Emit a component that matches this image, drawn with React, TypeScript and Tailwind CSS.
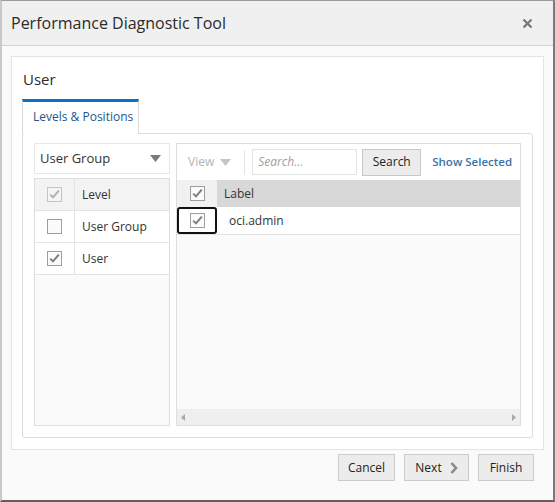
import React from 'react';

const font = { fontFamily: '"Open Sans", "Noto Sans", sans-serif' };

const CheckBox = ({ checked, faded }: { checked?: boolean; faded?: boolean }) => (
  <svg width="15" height="15" viewBox="0 0 15 15" className="block">
    <rect
      x="0.5"
      y="0.5"
      width="14"
      height="14"
      fill={faded ? '#f4f4f4' : '#fbfbfb'}
      stroke={faded ? '#c4c4c4' : '#9e9e9e'}
    />
    {checked && (
      <path
        d="M3.2 7.6 L6 10.4 L11.8 3.6"
        fill="none"
        stroke={faded ? '#b0b0b0' : '#7d7d7d'}
        strokeWidth="2"
      />
    )}
  </svg>
);

const Caret = ({ color }: { color: string }) => (
  <svg width="11" height="7" viewBox="0 0 11 7" className="block">
    <path d="M0 0 H11 L5.5 7 Z" fill={color} />
  </svg>
);

const levelRows = [
  { label: 'Level', checked: true, faded: true, head: true },
  { label: 'User Group', checked: false },
  { label: 'User', checked: true },
];

export default function App() {
  return (
    <div
      className="flex h-[502px] w-[555px] flex-col border-l-2 border-t border-r-2 border-b-2 border-l-[#c8c8c8] border-t-[#9a9a9a] border-r-[#7a7a7a] border-b-[#5f5f5f] bg-[#fafafa] text-[#333]"
      style={font}
    >
      <div className="flex h-[45px] shrink-0 items-center justify-between border-b border-[#d3d3d3] bg-[#f0f0f0] pl-[9px] pr-[20px]">
        <span className="text-[16px] text-[#2b2b2b]">Performance Diagnostic Tool</span>
        <svg width="11" height="11" viewBox="0 0 11 11">
          <path d="M1.5 1.5 L9.5 9.5 M9.5 1.5 L1.5 9.5" stroke="#777" strokeWidth="2.2" />
        </svg>
      </div>

      <div className="flex flex-1 flex-col px-[9px] pt-[10px]">
        <div className="flex flex-col border border-[#e4e4e4] bg-white px-[10px] pb-[11px] pt-[11px]">
          <div className="pl-px text-[15px] leading-[22px] text-[#2b2b2b]">User</div>

          <div className="mt-[9px] flex">
            <div className="relative z-10 -mb-px w-[117px] border-x border-t-[3px] border-x-[#d8d8d8] border-t-[#0a71c6] bg-white pb-[8px] pl-[10px] pt-[6px] text-[12px] text-[#22578c]">
              Levels &amp; Positions
            </div>
          </div>

          <div className="flex h-[305px] gap-[6px] rounded-[3px] border border-[#dcdcdc] pb-[11px] pl-[11px] pr-[11px] pt-[9px]">
            <div className="flex w-[136px] flex-col gap-[4px]">
              <div className="flex h-[31px] items-center justify-between border border-[#e6e6e6] bg-white pl-[5px] pr-[8px] text-[13px] text-[#333]">
                <span>User Group</span>
                <Caret color="#7a7a7a" />
              </div>
              <div className="flex-1 border border-[#dedede] bg-[#fafafa]">
                {levelRows.map((r) => (
                  <div
                    key={r.label}
                    className={`flex h-[32px] border-b border-[#e4e4e4] ${r.head ? 'bg-[#f3f3f3]' : 'bg-white'}`}
                  >
                    <div className="flex w-[40px] items-center justify-center border-r border-[#e4e4e4]">
                      <CheckBox checked={r.checked} faded={r.faded} />
                    </div>
                    <div className="flex items-center pl-[7px] text-[12px] text-[#333]">{r.label}</div>
                  </div>
                ))}
              </div>
            </div>

            <div className="flex flex-1 flex-col border border-[#dedede] bg-[#fafafa]">
              <div className="flex h-[36px] items-center bg-white pl-[11px]">
                <span className="text-[12px] text-[#b4b4b4]">View</span>
                <span className="ml-[6px]">
                  <Caret color="#c4c4c4" />
                </span>
                <div className="ml-[13px] h-[25px] w-px bg-[#e4e4e4]" />
                <div className="ml-[7px] flex h-[26px] w-[105px] items-center border border-[#e3e3e3] bg-white pl-[5px] text-[12px] italic text-[#a0a0a0]">
                  Search...
                </div>
                <div className="ml-[5px] flex h-[27px] w-[59px] items-center justify-center border border-[#c8c8c8] bg-[#ececec] text-[12px] text-[#222]">
                  Search
                </div>
                <span className="ml-[11px] text-[11.5px] font-semibold text-[#3a73a8]">Show Selected</span>
              </div>
              <div className="flex h-[27px]">
                <div className="flex w-[40px] items-center justify-center bg-[#f1f1f1]">
                  <CheckBox checked />
                </div>
                <div className="flex flex-1 items-center bg-[#d8d8d8] pl-[7px] text-[12px] text-[#333]">Label</div>
              </div>
              <div className="flex h-[28px] border-b border-[#e4e4e4] bg-white">
                <div className="flex w-[40px] items-center justify-center rounded-[3px] border-2 border-[#111]">
                  <CheckBox checked />
                </div>
                <div className="flex items-center pl-[12px] text-[12px] text-[#333]">oci.admin</div>
              </div>
              <div className="flex-1" />
              <div className="flex h-[16px] items-center justify-between bg-[#efefef] px-[4px]">
                <svg width="4" height="7" viewBox="0 0 4 7">
                  <path d="M4 0 V7 L0 3.5 Z" fill="#a8a8a8" />
                </svg>
                <svg width="4" height="7" viewBox="0 0 4 7">
                  <path d="M0 0 V7 L4 3.5 Z" fill="#a8a8a8" />
                </svg>
              </div>
            </div>
          </div>
        </div>

        <div className="flex justify-end gap-[9px] pr-[10px] pt-[4px]">
          <div className="flex h-[27px] w-[57px] items-center justify-center border border-[#cbcbcb] bg-[#ececec] text-[12px] text-[#222]">
            Cancel
          </div>
          <div className="flex h-[27px] w-[65px] items-center justify-center gap-[8px] border border-[#cbcbcb] bg-[#ececec] text-[12px] text-[#222]">
            <span>Next</span>
            <svg width="8" height="12" viewBox="0 0 8 12">
              <path d="M1.5 1 L6 6 L1.5 11" fill="none" stroke="#8a8a8a" strokeWidth="2.6" />
            </svg>
          </div>
          <div className="flex h-[27px] w-[56px] items-center justify-center border border-[#cbcbcb] bg-[#ececec] text-[12px] text-[#222]">
            Finish
          </div>
        </div>
      </div>
    </div>
  );
}
